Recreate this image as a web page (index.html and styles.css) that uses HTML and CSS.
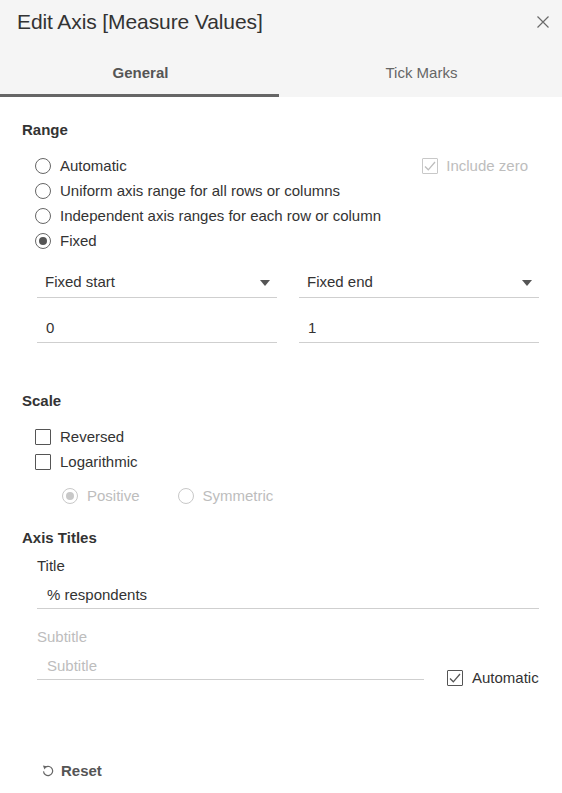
FILE: index.html
```html
<!DOCTYPE html>
<html>
<head>
<meta charset="utf-8">
<link rel="stylesheet" href="styles.css">
</head>
<body>
<div class="dialog">
  <header class="head">
    <div class="titlebar">
      <h1 class="title">Edit Axis [Measure Values]</h1>
      <span class="close"><svg width="12" height="12" viewBox="0 0 12 12"><path d="M0.5 0.5 L11.5 11.5 M11.5 0.5 L0.5 11.5" stroke="#6a6a6a" stroke-width="1.2" fill="none"/></svg></span>
    </div>
    <nav class="tabs">
      <div class="tab active">General</div>
      <div class="tab">Tick Marks</div>
    </nav>
  </header>

  <main class="content">
    <h2 class="heading first">Range</h2>
    <div class="options">
      <div class="row split">
        <label class="opt"><span class="radio"></span>Automatic</label>
        <label class="opt disabled zero"><span class="box checked"><svg width="12" height="10" viewBox="0 0 12 10"><path d="M1 5.5 L4.3 8.8 L11 1" stroke="currentColor" stroke-width="1.3" fill="none"/></svg></span>Include zero</label>
      </div>
      <div class="row"><label class="opt"><span class="radio"></span>Uniform axis range for all rows or columns</label></div>
      <div class="row"><label class="opt"><span class="radio"></span>Independent axis ranges for each row or column</label></div>
      <div class="row"><label class="opt"><span class="radio on"></span>Fixed</label></div>
    </div>
    <div class="fields">
      <div class="select">Fixed start<span class="caret"></span></div>
      <div class="select">Fixed end<span class="caret"></span></div>
      <div class="input">0</div>
      <div class="input">1</div>
    </div>

    <h2 class="heading scale">Scale</h2>
    <div class="options">
      <div class="row"><label class="opt"><span class="box"></span>Reversed</label></div>
      <div class="row"><label class="opt"><span class="box"></span>Logarithmic</label></div>
      <div class="row subopts">
        <label class="opt disabled"><span class="radio on"></span>Positive</label>
        <label class="opt disabled"><span class="radio"></span>Symmetric</label>
      </div>
    </div>

    <h2 class="heading axis">Axis Titles</h2>
    <div class="titles">
      <div class="label">Title</div>
      <div class="text-input">% respondents</div>
      <div class="label muted sub">Subtitle</div>
      <div class="subrow">
        <div class="text-input placeholder">Subtitle</div>
        <label class="opt auto"><span class="box checked"><svg width="12" height="10" viewBox="0 0 12 10"><path d="M1 5.5 L4.3 8.8 L11 1" stroke="currentColor" stroke-width="1.3" fill="none"/></svg></span>Automatic</label>
      </div>
    </div>

    <div class="reset">
      <svg width="12" height="13" viewBox="0 0 12 13"><path d="M3.4 3.2 A4.6 4.6 0 1 1 1.5 7.4" stroke="#666" stroke-width="1.2" fill="none"/><path d="M0.9 1.4 L4.8 2.3 L2.5 5.4 Z" fill="#666"/></svg>
      <span>Reset</span>
    </div>
  </main>
</div>
</body>
</html>
```

FILE: styles.css
```css
* { box-sizing: border-box; }
html, body { margin: 0; padding: 0; background: #fff; }
body {
  font-family: "Liberation Sans", Arial, sans-serif;
  font-size: 15px;
  color: #333;
  width: 562px;
  height: 793px;
  overflow: hidden;
}
.head { background: #f5f5f5; }
.titlebar {
  height: 42px;
  display: flex;
  align-items: center;
  justify-content: space-between;
  padding: 2px 13px 0 17px;
}
.title {
  margin: 0;
  font-size: 21px;
  font-weight: normal;
  color: #333;
  letter-spacing: -0.1px;
}
.close { display: flex; width: 12px; height: 12px; }
.tabs { display: flex; height: 55px; }
.tab {
  flex: 1;
  text-align: center;
  padding-top: 22px;
  line-height: 18px;
  color: #666;
  position: relative;
}
.tab.active { font-weight: bold; color: #555; }
.tab.active::after {
  content: "";
  position: absolute;
  left: 0;
  right: 2px;
  bottom: 0;
  height: 3px;
  background: #666;
}

.content { padding: 0 22px; }
.heading {
  margin: 0;
  font-size: 15px;
  line-height: 18px;
  font-weight: bold;
  color: #333;
}
.heading.first { margin-top: 24px; }
.heading.scale { margin-top: 49px; }
.heading.axis { margin-top: 21px; }

.options { margin-top: 14px; padding-left: 13px; }
.row { height: 25px; display: flex; align-items: center; }
.row.split { justify-content: space-between; padding-right: 12px; }
.opt { display: flex; align-items: center; gap: 9px; line-height: 18px; }
.opt.disabled { color: #bdbdbd; }
.opt.zero { gap: 8px; }

.radio {
  width: 16px; height: 16px;
  border: 1px solid #666;
  border-radius: 50%;
  display: flex;
  align-items: center;
  justify-content: center;
  background: #fff;
}
.radio.on::after {
  content: "";
  width: 8px; height: 8px;
  border-radius: 50%;
  background: #555;
}
.disabled .radio { border-color: #c8c8c8; }
.disabled .radio.on::after { background: #c8c8c8; }

.box {
  width: 16px; height: 16px;
  border: 1px solid #555;
  border-radius: 1px;
  display: flex;
  align-items: center;
  justify-content: center;
  color: #555;
  background: #fff;
}
.disabled .box { border-color: #c8c8c8; color: #bdbdbd; }

.row.subopts { margin-top: 9px; padding-left: 27px; gap: 38px; }

.fields {
  margin-top: 14px;
  margin-left: 15px;
  display: grid;
  grid-template-columns: 240px 240px;
  column-gap: 22px;
  row-gap: 14px;
}
.select, .input {
  height: 31px;
  line-height: 30px;
  border-bottom: 1px solid #cfcfcf;
  padding-left: 8px;
  position: relative;
}
.input { padding-left: 9px; line-height: 31px; }
.caret {
  position: absolute;
  right: 7px;
  top: 13px;
  width: 0; height: 0;
  border-left: 5px solid transparent;
  border-right: 5px solid transparent;
  border-top: 6px solid #555;
}

.titles { padding-left: 15px; }
.label { margin-top: 10px; line-height: 18px; color: #333; }
.label.muted { color: #bdbdbd; }
.label.sub { margin-top: 19px; }
.text-input {
  margin-top: 7px;
  height: 27px;
  line-height: 26px;
  padding-left: 10px;
  border-bottom: 1px solid #cfcfcf;
  width: 502px;
}
.text-input.placeholder { color: #bdbdbd; width: 387px; }
.subrow { display: flex; align-items: flex-start; gap: 23px; }
.opt.auto { margin-top: 19px; height: 25px; }

.reset {
  margin-top: 68px;
  margin-left: 20px;
  height: 25px;
  display: flex;
  align-items: center;
  gap: 7px;
  font-weight: bold;
  color: #555;
}
```
